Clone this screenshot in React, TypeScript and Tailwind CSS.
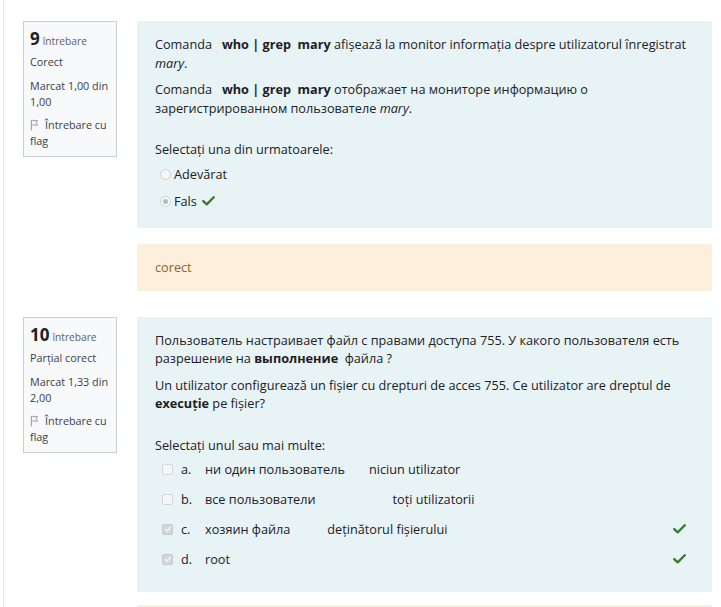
import React from 'react';

const CheckMark: React.FC<{ className?: string }> = ({ className }) => (
    <svg viewBox="0 0 14 11" className={className} width="13" height="10">
        <path d="M1.2 5.6 L5 9.2 L12.8 1.4" fill="none" stroke="#3a7a35" strokeWidth="2.6" strokeLinecap="round" strokeLinejoin="round" />
    </svg>
);

const FlagIcon: React.FC = () => (
    <svg viewBox="0 0 10 13" width="9" height="12" className="inline-block align-[-2px] mr-[6px]">
        <path d="M1.5 1 L1.5 12.5" stroke="#8a9097" strokeWidth="1" />
        <path d="M1.5 1.5 C3.5 0.5 5.5 2.5 8.5 1.5 L6.4 4 L8.5 6.5 C5.5 7.5 3.5 5.5 1.5 6.5" fill="none" stroke="#8a9097" strokeWidth="1" strokeLinejoin="round" />
    </svg>
);

const Radio: React.FC<{ checked?: boolean }> = ({ checked }) => (
    <span className="w-[11px] h-[11px] rounded-full border border-[#cfd3d6] bg-[#f4f6f7] flex items-center justify-center shrink-0">
        {checked && <span className="w-[5px] h-[5px] rounded-full bg-[#b9bcbf]" />}
    </span>
);

const Checkbox: React.FC<{ checked?: boolean }> = ({ checked }) => (
    <span className={`w-[11px] h-[11px] rounded-[2px] border flex items-center justify-center shrink-0 ${checked ? 'border-[#c6c9cc] bg-[#d4d7da]' : 'border-[#d3d7da] bg-[#f4f6f7]'}`}>
        {checked && (
            <svg viewBox="0 0 10 10" width="8" height="8">
                <path d="M1.5 5.2 L4 7.6 L8.6 2.2" fill="none" stroke="#f5f5f5" strokeWidth="1.6" />
            </svg>
        )}
    </span>
);

const InfoBox: React.FC<{ num: string; state: string; mark: string; max: string }> = ({ num, state, mark, max }) => (
    <div className="w-[94px] shrink-0 self-start border border-[#cad0d7] bg-[#f8f9fa] px-[6px] pt-[6px] pb-[7px] text-[10.8px] leading-[16px] text-[#3a3f44]">
        <div className="flex items-baseline gap-[3px] leading-[22px]">
            <span className="text-[17px] font-bold text-[#1d2125]">{num}</span>
            <span className="text-[10.2px] text-[#5c6167]">întrebare</span>
        </div>
        <div className="mt-[2px]">{state}</div>
        <div className="mt-[8px] w-[80px]">Marcat {mark} din {max}</div>
        <div className="mt-[7px]">
            <FlagIcon />
            Întrebare cu flag
        </div>
    </div>
);

const Feedback: React.FC<{ text: string; className?: string }> = ({ text, className }) => (
    <div className={`bg-[#fcefdc] px-[18px] py-[14px] leading-[19px] text-[#8e662e] ${className ?? ''}`}>{text}</div>
);

const nb = '\u00a0';

export default function App() {
    return (
        <div className="min-h-screen bg-white font-['Open_Sans',sans-serif] text-[12.7px] text-[#1d2125] overflow-hidden">
            <div className="ml-[3px] border-l border-[#e6eaee] pl-[19px] pr-[9px] pt-[21px] pb-10">
                {/* question 9 */}
                <div className="flex gap-[20px]">
                    <InfoBox num="9" state="Corect" mark="1,00" max="1,00" />
                    <div className="flex-1 flex flex-col">
                        <div className="bg-[#e7f3f5] px-[18px] pt-[14px] pb-[13px] leading-[18.5px]">
                            <p>
                                Comanda{nb}{nb}{nb}<b>who | grep{nb}{nb}mary</b> afișează la monitor informația despre utilizatorul înregistrat <i>mary</i>.
                            </p>
                            <p className="mt-[8px]">
                                Comanda{nb}{nb}{nb}<b>who | grep{nb}{nb}mary</b> отображает на мониторе информацию о зарегистрированном пользователе <i>mary</i>.
                            </p>
                            <p className="mt-[23px]">Selectați una din urmatoarele:</p>
                            <div className="mt-[2px] pl-[5px]">
                                <div className="h-[27px] flex items-center gap-[3px]">
                                    <Radio />
                                    <span>Adevărat</span>
                                </div>
                                <div className="h-[27px] flex items-center gap-[3px]">
                                    <Radio checked />
                                    <span>Fals</span>
                                    <CheckMark className="ml-[2px]" />
                                </div>
                            </div>
                        </div>
                        <Feedback text="corect" className="mt-[16px]" />
                    </div>
                </div>

                {/* question 10 */}
                <div className="flex gap-[20px] mt-[26px]">
                    <InfoBox num="10" state="Parțial corect" mark="1,33" max="2,00" />
                    <div className="flex-1 flex flex-col">
                        <div className="bg-[#e7f3f5] px-[18px] pt-[14px] pb-[18px] leading-[18.5px]">
                            <p>
                                Пользователь настраивает файл с правами доступа 755. У какого пользователя есть разрешение на <b>выполнение</b>{nb} файла ?
                            </p>
                            <p className="mt-[8px]">
                                Un utilizator configurează un fișier cu drepturi de acces 755. Ce utilizator are dreptul de <b>execuție</b> pe fișier?
                            </p>
                            <p className="mt-[23px]">Selectați unul sau mai multe:</p>
                            <div className="pl-[7px] pr-[8px]">
                                {[
                                    { l: 'a.', ru: 'ни один пользователь', ro: 'niciun utilizator', gap: 'ml-[24px]', on: false },
                                    { l: 'b.', ru: 'все пользователи', ro: 'toți utilizatorii', gap: 'ml-[77px]', on: false },
                                    { l: 'c.', ru: 'хозяин файла', ro: 'deținătorul fișierului', gap: 'ml-[37px]', on: true },
                                    { l: 'd.', ru: 'root', ro: '', gap: '', on: true },
                                ].map((o) => (
                                    <div key={o.l} className="h-[30px] flex items-center">
                                        <Checkbox checked={o.on} />
                                        <span className="ml-[8px] w-[24px]">{o.l}</span>
                                        <span>{o.ru}</span>
                                        {o.ro && <span className={o.gap}>{o.ro}</span>}
                                        {o.on && <CheckMark className="ml-auto" />}
                                    </div>
                                ))}
                            </div>
                        </div>
                        <Feedback text="Răspunsul dvs. este parțial corect." className="mt-[13px]" />
                    </div>
                </div>
            </div>
        </div>
    );
}
